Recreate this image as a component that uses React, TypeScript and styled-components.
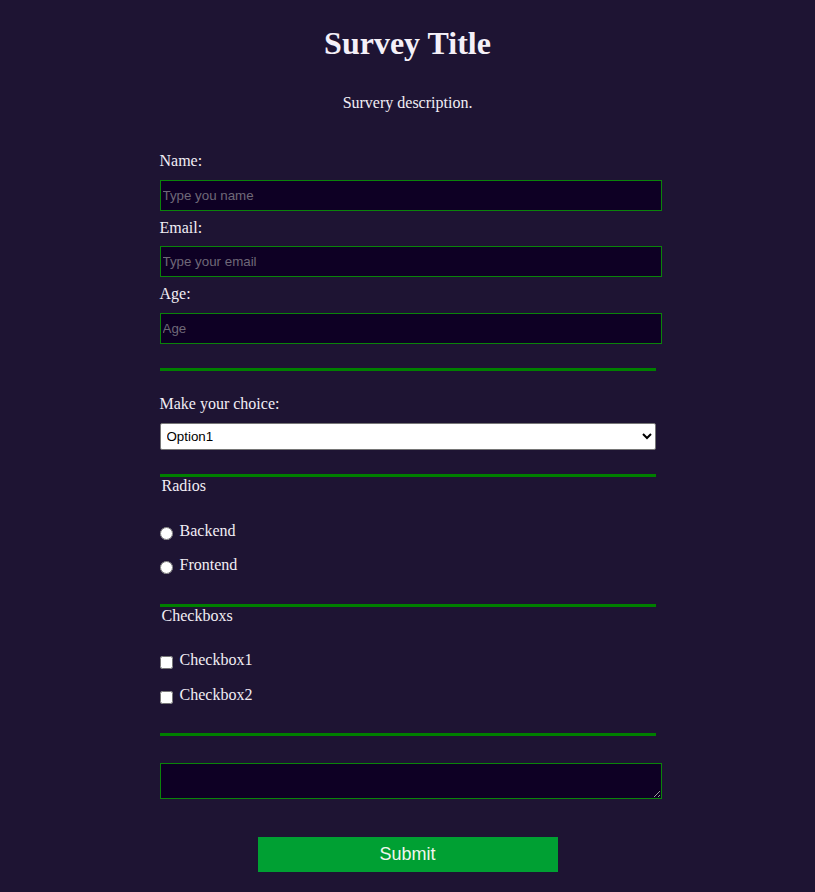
import React from "react";
import styled, { createGlobalStyle } from "styled-components";

const Global = createGlobalStyle`
  html, body {
    margin: 0;
    padding: 0;
    background: #1e1433;
  }
  body {
    font-family: "Liberation Serif", "Times New Roman", serif;
    color: #f2eef5;
    min-height: 892px;
  }
`;

const Page = styled.div`
  display: flex;
  flex-direction: column;
  align-items: center;
  padding: 25px 0 20px;
`;

const Title = styled.h1`
  margin: 0;
  font-size: 32px;
  line-height: 37px;
  font-weight: bold;
  color: #f4f0f8;
`;

const Description = styled.p`
  margin: 32px 0 0;
  font-size: 16px;
  line-height: 18.4px;
`;

const Form = styled.form`
  width: 496px;
  margin-top: 40px;
  display: flex;
  flex-direction: column;
`;

const Label = styled.label<{ $top?: number }>`
  display: block;
  font-size: 16px;
  line-height: 18.4px;
  margin: ${(p) => p.$top ?? 0}px 0 9px;
`;

const TextInput = styled.input`
  box-sizing: border-box;
  width: 502px;
  height: 31px;
  margin: 0 0 8px;
  padding: 0 2px;
  background: #0e0024;
  border: 1px solid #0a840a;
  color: #eee;
  font-family: "Liberation Sans", Arial, sans-serif;
  font-size: 13.33px;
  outline: none;
  &::placeholder {
    color: #6e6878;
  }
`;

const Rule = styled.hr<{ $top: number }>`
  width: 496px;
  height: 3px;
  margin: ${(p) => p.$top}px 0 0;
  border: none;
  background: #008000;
`;

const Select = styled.select`
  box-sizing: border-box;
  width: 496px;
  height: 27px;
  margin: 0;
  background: #fff;
  color: #000;
  border: 1px solid #767676;
  border-radius: 2px;
  font-family: "Liberation Sans", Arial, sans-serif;
  font-size: 13.33px;
  padding: 0 2px;
`;

const GroupTitle = styled.div<{ $gap: number }>`
  font-size: 16px;
  line-height: 18.4px;
  padding-left: 2px;
  margin-bottom: ${(p) => p.$gap}px;
`;

const Option = styled.label<{ $last?: boolean }>`
  display: flex;
  align-items: flex-start;
  font-size: 16px;
  line-height: 18.4px;
  margin-bottom: ${(p) => (p.$last ? 0 : 16)}px;
  input {
    width: 13px;
    height: 13px;
    margin: 5px 7px 0 0;
  }
`;

const TextArea = styled.textarea`
  box-sizing: border-box;
  width: 502px;
  height: 36px;
  margin: 27px 0 0;
  background: #0e0024;
  border: 1px solid #0a840a;
  color: #eee;
  display: block;
`;

const SubmitRow = styled.div`
  display: flex;
  justify-content: center;
  width: 496px;
  margin-top: 38px;
`;

const Submit = styled.button`
  width: 300px;
  height: 35px;
  background: #00a033;
  color: #f2f6ee;
  border: none;
  font-family: "Liberation Sans", Arial, sans-serif;
  font-size: 18px;
  cursor: pointer;
`;

export default function App() {
  return (
    <>
      <Global />
      <Page>
        <Title>Survey Title</Title>
        <Description>Survery description.</Description>
        <Form onSubmit={(e) => e.preventDefault()}>
          <Label htmlFor="name">Name:</Label>
          <TextInput id="name" type="text" placeholder="Type you name" />
          <Label htmlFor="email">Email:</Label>
          <TextInput id="email" type="email" placeholder="Type your email" />
          <Label htmlFor="age">Age:</Label>
          <TextInput id="age" type="number" placeholder="Age" />

          <Rule $top={16} />
          <Label htmlFor="choice" $top={24.6}>
            Make your choice:
          </Label>
          <Select id="choice" defaultValue="Option1">
            <option>Option1</option>
            <option>Option2</option>
            <option>Option3</option>
          </Select>

          <Rule $top={24} />
          <GroupTitle $gap={27}>Radios</GroupTitle>
          <Option>
            <input type="radio" name="role" value="backend" />
            Backend
          </Option>
          <Option $last>
            <input type="radio" name="role" value="frontend" />
            Frontend
          </Option>

          <Rule $top={29} />
          <GroupTitle $gap={26}>Checkboxs</GroupTitle>
          <Option>
            <input type="checkbox" />
            Checkbox1
          </Option>
          <Option $last>
            <input type="checkbox" />
            Checkbox2
          </Option>

          <Rule $top={29.3} />
          <TextArea />
          <SubmitRow>
            <Submit type="submit">Submit</Submit>
          </SubmitRow>
        </Form>
      </Page>
    </>
  );
}
